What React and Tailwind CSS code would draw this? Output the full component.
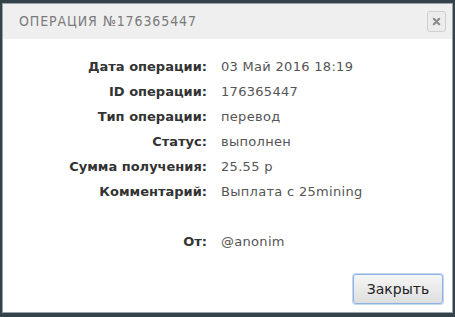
import React from "react";

const rows = [
    ["Дата операции:", "03 Май 2016 18:19"],
    ["ID операции:", "176365447"],
    ["Тип операции:", "перевод"],
    ["Статус:", "выполнен"],
    ["Сумма получения:", "25.55 р"],
    ["Комментарий:", "Выплата с 25mining"],
    ["", ""],
    ["От:", "@anonim"],
];

const App = () => {
    return (
        <div className="w-[455px] h-[317px] bg-[#34424a] pt-[3px] pl-[2px] font-['DejaVu_Sans',sans-serif]">
            <div className="w-[451px] h-[310px] bg-white border border-[#9aa3a8] flex flex-col">
                {/* HEADER */}
                <div className="h-[35px] bg-[#efefef] flex items-center justify-between pl-[16px] pr-[6px]">
                    <h1 className="text-[14px] tracking-[1px] text-[#7a7a7a] scale-x-[0.9] origin-left">ОПЕРАЦИЯ №176365447</h1>
                    <button className="w-[19px] h-[21px] rounded-[3px] border border-[#cfcfcf] bg-[#ececec] flex items-center justify-center">
                        <svg width="9" height="9" viewBox="0 0 10 10">
                            <path d="M2 2L8 8M8 2L2 8" stroke="#8a8a8a" strokeWidth="2.4" strokeLinecap="round" />
                        </svg>
                    </button>
                </div>

                {/* DETAILS */}
                <div className="grid grid-cols-[204px_1fr] gap-x-[14px] pt-[15px] text-[13px]">
                    {rows.map(([label, value], i) => (
                        <React.Fragment key={i}>
                            <div className="h-[25px] leading-[25px] text-right font-bold text-[#333]">{label}</div>
                            <div className="h-[25px] leading-[25px] text-[#555] tracking-[0.3px]">{value}</div>
                        </React.Fragment>
                    ))}
                </div>

                {/* FOOTER */}
                <div className="mt-auto flex justify-end pr-[9px] pb-[8px]">
                    <button className="w-[90px] h-[30px] rounded-[3px] border border-[#8db2e6] bg-gradient-to-b from-[#f6f6f6] to-[#dedede] text-[14px] text-[#222] shadow-[0_0_0_1px_#c3d6f2]">
                        Закрыть
                    </button>
                </div>
            </div>
        </div>
    );
};

export default App;
